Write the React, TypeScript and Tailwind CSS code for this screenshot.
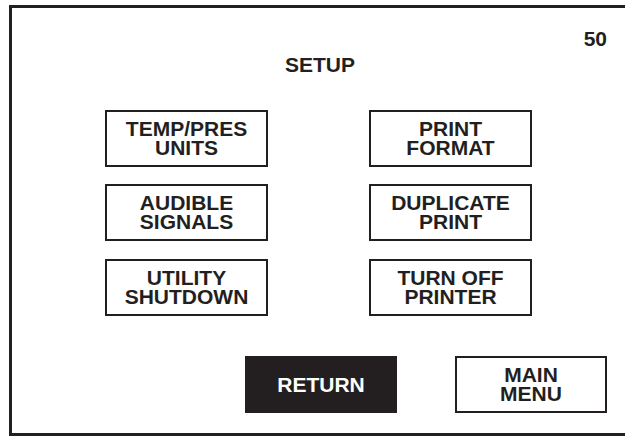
import React from "react";

const Btn = ({ lines }: { lines: string[] }) => (
  <div className="w-[163px] h-[57px] border-2 border-[#231f20] bg-white flex flex-col items-center justify-center text-center text-[21px] leading-[18.5px] font-bold text-[#231f20]">
    {lines.map((l) => (
      <span key={l} className="whitespace-nowrap">{l}</span>
    ))}
  </div>
);

export default function App() {
  return (
    <div
      className="w-[625px] h-[436px] overflow-hidden bg-white pt-[5px] pl-[9px]"
      style={{ fontFamily: '"Liberation Sans", Arial, sans-serif' }}
    >
      <div className="w-[640px] h-[431px] border-[3px] border-[#231f20]">
        <div className="w-[595px] flex flex-col">
          <div className="mt-[20px] h-[21px] leading-[21px] text-[21px] font-bold text-right text-[#231f20]">50</div>
          <div className="mt-[5px] h-[21px] leading-[21px] text-[21px] font-bold text-center pl-[21px] text-[#231f20]">SETUP</div>
          <div className="mt-[35px] ml-[93px] grid grid-cols-[163px_163px] gap-x-[101px]">
            <Btn lines={["TEMP/PRES", "UNITS"]} />
            <Btn lines={["PRINT", "FORMAT"]} />
            <div className="mt-[17px]"><Btn lines={["AUDIBLE", "SIGNALS"]} /></div>
            <div className="mt-[17px]"><Btn lines={["DUPLICATE", "PRINT"]} /></div>
            <div className="mt-[18px]"><Btn lines={["UTILITY", "SHUTDOWN"]} /></div>
            <div className="mt-[18px]"><Btn lines={["TURN OFF", "PRINTER"]} /></div>
          </div>
          <div className="mt-[40px] ml-[233px] flex gap-[58px]">
            <div className="w-[153px] h-[57px] bg-[#231f20] flex items-center justify-center text-[21px] leading-[21px] font-bold text-white">RETURN</div>
            <div className="w-[153px] h-[57px] border-2 border-[#231f20] bg-white flex flex-col items-center justify-center text-center text-[21px] leading-[18.5px] font-bold text-[#231f20]">
              <span>MAIN</span>
              <span>MENU</span>
            </div>
          </div>
        </div>
      </div>
    </div>
  );
}
